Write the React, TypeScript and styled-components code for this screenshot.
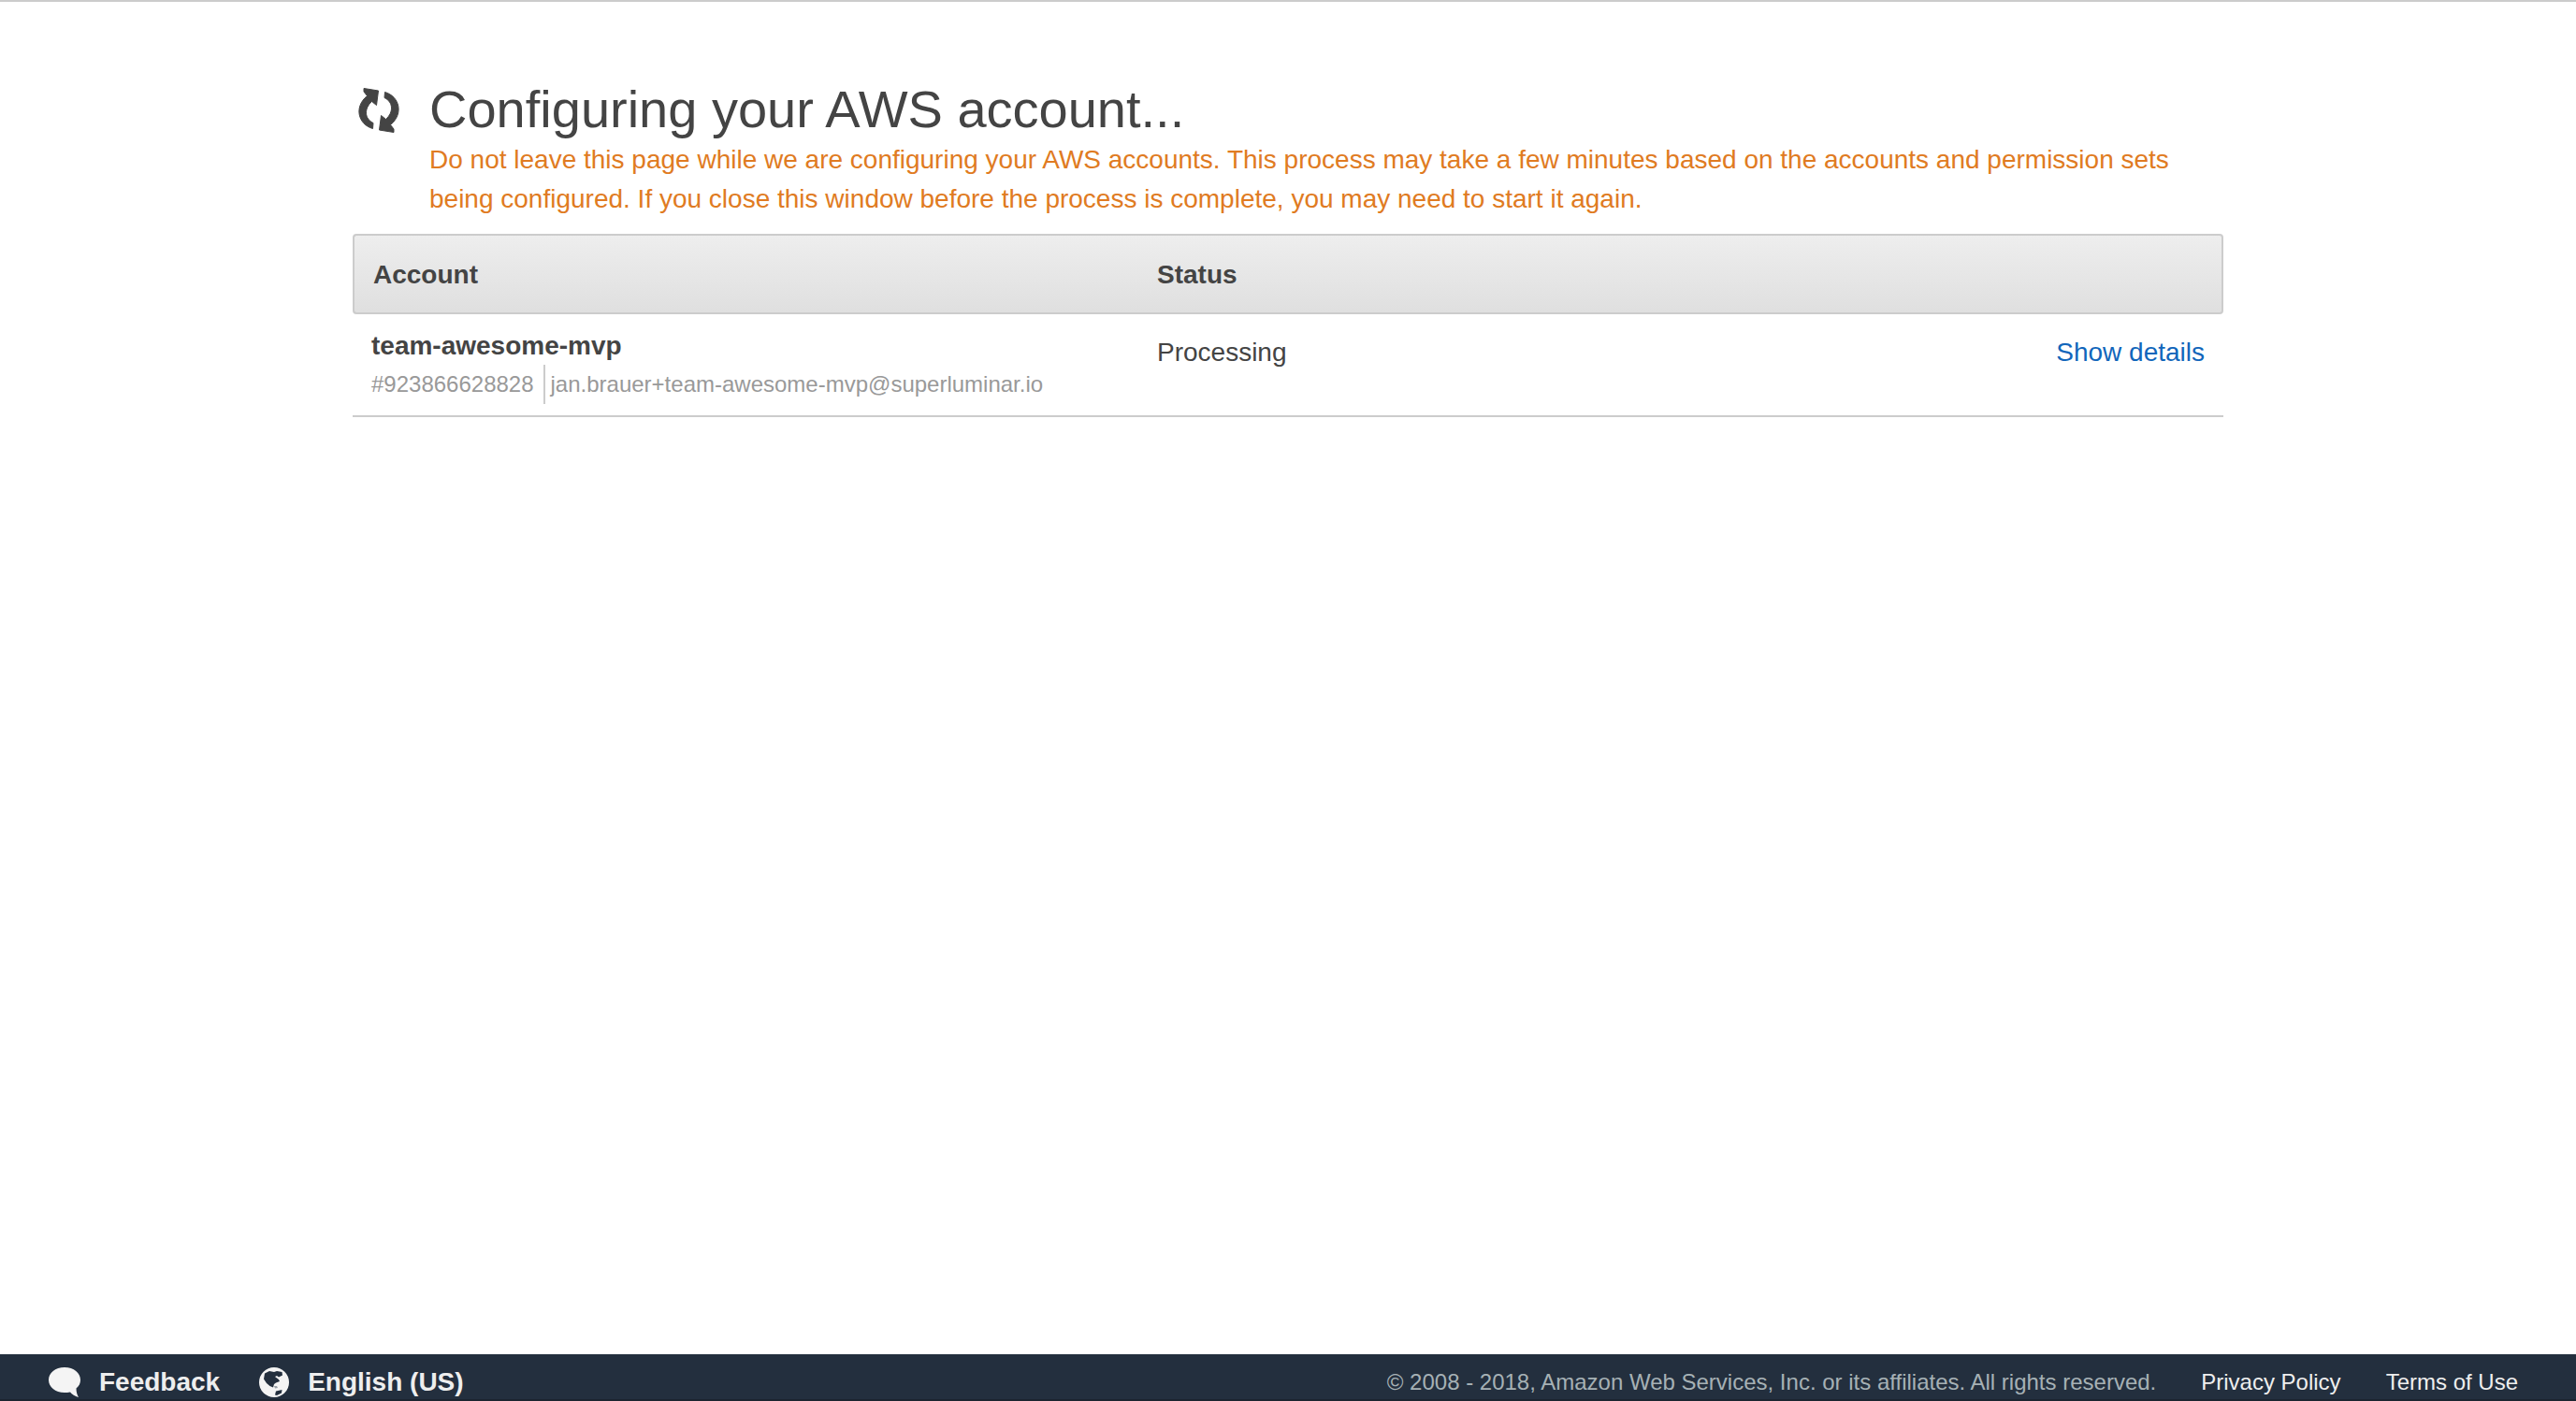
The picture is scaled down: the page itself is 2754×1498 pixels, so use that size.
import React from "react";
import styled, { createGlobalStyle } from "styled-components";

const GlobalStyle = createGlobalStyle`
  *, *::before, *::after { box-sizing: border-box; }
  body {
    margin: 0;
    background: #fff;
    color: #444;
    font-family: "Helvetica Neue", "Liberation Sans", Arial, sans-serif;
    font-size: 28px;
    line-height: 42px;
  }
`;

const Page = styled.div`
  display: flex;
  flex-direction: column;
  min-height: 100vh;
  border-top: 2px solid #ccc;
`;

const Content = styled.main`
  flex: 1;
  width: 100%;
  max-width: 2000px;
  margin: 0 auto;
  padding-top: 82px;
`;

const Intro = styled.header`
  display: grid;
  grid-template-columns: 56px 1fr;
  column-gap: 26px;
  margin-bottom: 16px;
`;

const RefreshGraphic = styled.svg`
  width: 56px;
  height: 60px;
  margin-top: 2px;
  fill: #444;
  stroke: #444;
  stroke-width: 1;
  stroke-linejoin: round;
`;

const Title = styled.h1`
  margin: 0;
  font-size: 56px;
  font-weight: 400;
  line-height: 66px;
`;

const Warning = styled.p`
  margin: 0;
  color: #e07b22;
`;

const AccountsTable = styled.table`
  width: 100%;
  table-layout: fixed;
  border-collapse: separate;
  border-spacing: 0;
`;

const HeadCell = styled.th<{ $width?: string }>`
  width: ${(p) => p.$width ?? "auto"};
  padding: 21px 20px 19px;
  border: 2px solid #ccc;
  border-width: 2px 0;
  background: linear-gradient(#eee, #dfdfdf);
  background-origin: border-box;
  font-weight: 700;
  text-align: left;

  &:first-child {
    border-left-width: 2px;
    border-radius: 4px 0 0 4px;
  }
  &:last-child {
    border-right-width: 2px;
    border-radius: 0 4px 4px 0;
  }
`;

const Cell = styled.td<{ $top?: number; $end?: boolean }>`
  padding: ${(p) => p.$top ?? 20}px 20px 12px;
  border-bottom: 2px solid #ccc;
  text-align: ${(p) => (p.$end ? "right" : "left")};
  vertical-align: top;
`;

const AccountName = styled.div`
  font-weight: 700;
  line-height: 40px;
`;

const AccountMeta = styled.div`
  display: flex;
  color: #999;
  font-size: 24px;
  white-space: nowrap;
`;

const AccountEmail = styled.span`
  margin-left: 10px;
  padding-left: 6px;
  border-left: 2px solid #ccc;
`;

const DetailsButton = styled.button`
  padding: 0;
  border: 0;
  background: none;
  color: #1166bb;
  font: inherit;
  cursor: pointer;
`;

const Footer = styled.footer`
  display: flex;
  justify-content: space-between;
  padding: 14px 62px 2px 52px;
  border-bottom: 2px solid #1b2430;
  background: #232f3e;
  line-height: 32px;
`;

const FooterTools = styled.div`
  display: flex;
  gap: 40px;
`;

const FooterButton = styled.button`
  display: flex;
  align-items: flex-start;
  gap: 20px;
  padding: 0;
  border: 0;
  background: none;
  color: #eee;
  font: inherit;
  font-weight: 700;
  cursor: pointer;
`;

const FooterGraphic = styled.svg`
  width: 34px;
  height: 32px;
`;

const Legal = styled.div`
  display: flex;
  gap: 48px;
  color: #a6b1b5;
  font-size: 24px;
`;

const LegalLink = styled.a`
  color: #eee;
  text-decoration: none;
`;

const arrow =
  "M12 8.5 L27.5 11 L25.5 26.5 L20.5 22.5 C12 30 12.5 41 22 45.5 L21.5 51.5 C6 47 1 28.500 15.500 16.500 L12 12 Z";

const RefreshIcon = () => (
  <RefreshGraphic viewBox="0 0 56 60" aria-hidden="true">
    <path d={arrow} />
    <path d={arrow} transform="rotate(180 28 32)" />
  </RefreshGraphic>
);

const BubbleIcon = () => (
  <FooterGraphic viewBox="0 0 34 32" fill="#f4f4f4" aria-hidden="true">
    <path d="M17 0 C7 0 0 6 0 13.500 C0 21 7 27 17 27 C19 27 21 26.900 23 26.500 C25 29 28 31 32 32 C30.500 29.500 29.500 26.500 29.500 22.500 C32.500 20 34 17 34 13.500 C34 6 27 0 17 0 Z" />
  </FooterGraphic>
);

const GlobeIcon = () => (
  <FooterGraphic viewBox="0 0 34 32" aria-hidden="true">
    <circle cx="18" cy="16" r="16" fill="#f4f4f4" />
    <path
      fill="#232f3e"
      d="M8 6.500 L13 4 L18 5 L21 4 L26.500 5 L27 8.500 L23 10.500 L21 9 L19 10 L23 13 L24 15 L20 16.500 L18 18 L17 21.500 L13.500 20 L10 17 L7 12.500 Z M20 25.500 L26.500 24 L26 27.500 L21 30 L19 29.500 Z"
    />
    <path fill="#9aa1a8" d="M18 20 L21 20 L22 22 L19 22.500 Z" />
  </FooterGraphic>
);

export default function App() {
  return (
    <>
      <GlobalStyle />
      <Page>
        <Content>
          <Intro>
            <RefreshIcon />
            <div>
              <Title>Configuring your AWS account...</Title>
              <Warning>
                Do not leave this page while we are configuring your AWS accounts. This process may
                take a few minutes based on the accounts and permission sets being configured. If
                you close this window before the process is complete, you may need to start it
                again.
              </Warning>
            </div>
          </Intro>
          <AccountsTable>
            <thead>
              <tr>
                <HeadCell $width="42%">Account</HeadCell>
                <HeadCell>Status</HeadCell>
                <HeadCell aria-label="Actions" />
              </tr>
            </thead>
            <tbody>
              <tr>
                <Cell $top={14}>
                  <AccountName>team-awesome-mvp</AccountName>
                  <AccountMeta>
                    <span>#923866628828</span>
                    <AccountEmail>jan.brauer+team-awesome-mvp@superluminar.io</AccountEmail>
                  </AccountMeta>
                </Cell>
                <Cell>Processing</Cell>
                <Cell $end>
                  <DetailsButton type="button">Show details</DetailsButton>
                </Cell>
              </tr>
            </tbody>
          </AccountsTable>
        </Content>
        <Footer>
          <FooterTools>
            <FooterButton type="button">
              <BubbleIcon />
              Feedback
            </FooterButton>
            <FooterButton type="button">
              <GlobeIcon />
              English (US)
            </FooterButton>
          </FooterTools>
          <Legal>
            <span>© 2008 - 2018, Amazon Web Services, Inc. or its affiliates. All rights reserved.</span>
            <LegalLink href="#privacy">Privacy Policy</LegalLink>
            <LegalLink href="#terms">Terms of Use</LegalLink>
          </Legal>
        </Footer>
      </Page>
    </>
  );
}
